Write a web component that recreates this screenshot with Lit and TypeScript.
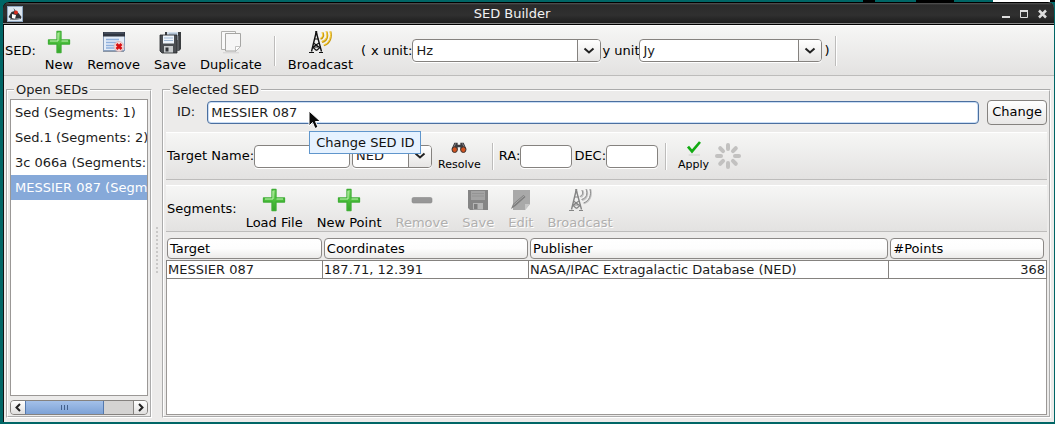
import { LitElement, html, svg, css } from "lit";
import { customElement, property } from "lit/decorators.js";

const plus = svg`
  <defs><linearGradient id="g" x1="0" y1="0" x2="0" y2="1"><stop offset="0" stop-color="#8fe07a"/><stop offset=".5" stop-color="#4cc03c"/><stop offset="1" stop-color="#37a32b"/></linearGradient></defs>
  <path d="M10 1.500h4v8.500h8.500v4H14v8.500h-4V14H1.500v-4H10z" fill="url(#g)" stroke="#3fae35" stroke-width="1.300" stroke-linejoin="round"/>
  <path d="M11 3v8H3M14.500 11H21" fill="none" stroke="#c4f2b6" stroke-width="1"/>`;

const windowDelete = svg`
  <rect x="1.500" y="2.500" width="21" height="18" fill="#e4edf8" stroke="#8ba0bd"/>
  <path d="M1 2h22v4.500H1z" fill="#2f3540"/><path d="M2 3h20" stroke="#596272"/>
  <path d="M4 9.500h13M4 12.500h13M4 15.500h8M4 18h8" stroke="#8fb0dc" stroke-width="1.400"/>
  <path d="M1 21.500h21" stroke="#8b95a3"/>
  <circle cx="17" cy="16.500" r="5" fill="#f3dada" stroke="#d8b4b4" stroke-width=".8"/>
  <path d="M14.500 14l5 5M19.500 14l-5 5" stroke="#d80f12" stroke-width="2.600"/>`;

const floppies = svg`
  <path d="M7 2h16v17l-2 2H7z" fill="#3a3d40"/><path d="M9 2h11v8H9z" fill="#cfdbe8"/><path d="M11 4h8M11 6h8" stroke="#8da4bd"/>
  <path d="M2 5h17v18H4l-2-2z" fill="#4b4e52" stroke="#24272a" stroke-width=".8"/>
  <path d="M5 5.500h11v8H5z" fill="#eef4fb"/><path d="M6 8h9M6 10.500h9" stroke="#9fb8d4"/>
  <path d="M6 16h9v6.500H6z" fill="#c9ccce"/><path d="M7.500 17.500h3v4h-3z" fill="#33363a"/>
  <path d="M20 6v15" stroke="#767a7e"/>`;

const pages = svg`
  <path d="M2.500 1.500h14v18h-14z" fill="#f9f9f9" stroke="#b0b0ae"/>
  <path d="M6.500 3.500h15v13l-4.500 4.500H6.500z" fill="#f6f6f6" stroke="#a6a6a4"/>
  <path d="M21.500 16.500h-5v5z" fill="#fff" stroke="#b4b4b2" stroke-width=".8"/>
  <path d="M4 22.800h16" stroke="#d2d1d0"/>`;

const antenna = (mast: string, wave: string, edge: string) => svg`
  <g fill="none" stroke="${mast}" stroke-width="1.100">
    <path d="M8 3L3.500 21.500M8.500 3L13.500 21.500" stroke-width="1.400"/>
    <path d="M8.200 1v4" stroke-width="2"/>
    <path d="M6.500 9h4M5.500 13l5.500 4M11 13L5 17M5 17h7.500M4.500 17l4 3.500M12.500 17l-4 3.500M1 22.500h5M11 22.500h4"/>
  </g>
  <g fill="none" stroke="${edge}" stroke-width="1.800"><path d="M12.500 9c3-1 3.500-4 2-6.500M14 12c5-1 6.500-6 4.500-10.500M16 15.500c6-2 8-8 6.500-14"/></g>
  <g fill="none" stroke="${wave}" stroke-width="1"><path d="M11.800 8.500c3-1 3.500-4 2-6.500M13.500 11.500c5-1 6.500-6 4.500-10.500M15.500 15c6-2 8-8 6.500-14"/></g>`;

const minus = svg`<rect x="2" y="9.500" width="20" height="5.500" rx="1.500" fill="#979797" stroke="#8a8a8a" stroke-width=".6"/>`;

const floppyGray = svg`
  <path d="M2 2h20v20H4l-2-2z" fill="#858585"/><path d="M5 3h14v9H5z" fill="#a3a3a3"/>
  <path d="M6 5.500h12M6 8h12" stroke="#949494"/><path d="M7 15h10v6.500H7z" fill="#b5b5b5"/><path d="M8 16h3.500v5H8z" fill="#7d7d7d"/>`;

const editGray = svg`
  <path d="M4 2h17v14l-5 6H4z" fill="#a9a9a9"/><path d="M21 16h-5v6z" fill="#c6c6c6"/>
  <path d="M2 21l2-5L14.500 7l2 2L6.500 18z" fill="#7e7e7e"/><path d="M4.500 17L15 8" stroke="#b5b5b5" stroke-width=".8"/>`;

const binoculars = svg`
  <path d="M5 4h5v3h4V4h5l4 9-5 4-4-2v-4h-4v4l-4 2-5-4z" fill="#3d3d40"/>
  <path d="M7 5l-3 6M17 5l3 6" stroke="#85858a" stroke-width="1.500"/>
  <ellipse cx="5.500" cy="14.500" rx="4" ry="4.200" fill="#d2531f" stroke="#333" stroke-width="1.400"/>
  <ellipse cx="18.500" cy="14.500" rx="4" ry="4.200" fill="#d2531f" stroke="#333" stroke-width="1.400"/>`;

const check = svg`
  <path d="M3 10l6 7L21 3" fill="none" stroke="#12ab12" stroke-width="4"/>
  <path d="M4 22.500h17" stroke="#cfcecd" stroke-width="1.500"/>`;

const icons: Record<string, unknown> = {
  plus, windowDelete, floppies, pages, minus, floppyGray, editGray, binoculars, check,
  antenna: antenna("#111", "#ffd84a", "#c89a10"),
  antennaGray: antenna("#858585", "#8f8f8f", "#c4c4c4"),
};

@customElement("tool-button")
class ToolButton extends LitElement {
  @property() icon = "";
  @property() label = "";
  @property({ type: Boolean }) disabled = false;
  @property({ type: Boolean, reflect: true }) small = false;

  static styles = css`
    :host { display: block; }
    button {
      display: flex; flex-direction: column; align-items: center; gap: 3px;
      border: 0; padding: 2px 7px 0; background: none; color: #000;
      font: 13px/16px "DejaVu Sans", sans-serif; white-space: nowrap;
    }
    button:disabled { color: #b0afae; text-shadow: 1px 1px #fff; }
    svg { width: 24px; height: 24px; display: block; }
    :host([small]) button { font-size: 11px; gap: 2px; line-height: 14px; padding: 0 6px; }
    :host([small]) svg { width: 16px; height: 16px; }
  `;

  render() {
    return html`<button type="button" ?disabled=${this.disabled}>
      <svg viewBox="0 0 24 24" aria-hidden="true">${icons[this.icon]}</svg>
      <span>${this.label}</span>
    </button>`;
  }
}

@customElement("combo-box")
class ComboBox extends LitElement {
  @property() value = "";
  @property() name = "";

  static styles = css`
    :host { display: grid; height: 23px; }
    select, .arrow { grid-area: 1 / 1; }
    select {
      appearance: none; width: 100%; height: 23px; margin: 0; padding: 0 24px 0 3px;
      border: 1px solid #85827f; border-radius: 4px; background: #fff; color: #1c1c1c;
      font: 13px/16px "DejaVu Sans", sans-serif; box-shadow: 0 1px #fff;
    }
    .arrow {
      justify-self: end; width: 22px; margin: 1px; pointer-events: none; z-index: 1;
      display: grid; place-items: center; border-left: 1px solid #85827f;
      border-radius: 0 3px 3px 0; background: linear-gradient(#fff, #e6e5e4);
    }
    svg { width: 12px; height: 8px; }
  `;

  render() {
    return html`<select aria-label=${this.name}><option>${this.value}</option></select>
      <span class="arrow"><svg viewBox="0 0 12 8"><path d="M1.500 1.500L6 5.500l4.500-4" fill="none" stroke="#222" stroke-width="2"/></svg></span>`;
  }
}

@customElement("app-root")
class AppRoot extends LitElement {
  private seds = ["Sed (Segments: 1)", "Sed.1 (Segments: 2)", "3c 066a (Segments: 1)", "MESSIER 087 (Segments: 1)"];
  private columns = ["Target", "Coordinates", "Publisher", "#Points"];
  private rows = [["MESSIER 087", "187.71, 12.391", "NASA/IPAC Extragalactic Database (NED)", "368"]];

  static styles = css`
    * { box-sizing: border-box; }
    :host {
      display: flex; flex-direction: column; min-height: 100vh; padding: 0 1px 2px 3px;
      background: #006666; font: 13px/16px "DejaVu Sans", sans-serif; color: #1c1c1c;
      box-sizing: border-box;
    }
    .desktop {
      height: 2px; margin: 0 -1px 0 -3px;
      background: linear-gradient(270deg, #000 0 5px, #fff 5px 62px, #066 62px 101px, #000 101px 139px, #066 139px 180px, #000 180px 192px, #066 192px);
    }
    .window {
      flex: 1; display: flex; flex-direction: column; border-left: 1px solid #111;
      border-radius: 6px 6px 0 0; background: #ecebea;
    }
    .titlebar {
      height: 23px; display: flex; align-items: center;
      padding: 0 5px 0 4px; margin-left: -1px; border-radius: 6px 6px 0 0; border: solid #000; border-width: 1px 0;
      background: linear-gradient(#565656, #2b2b2b 2px, #303030 12px, #222 18px, #1c1c1c 20px, #888 20px);
      color: #f2f2f2;
    }
    .title { flex: 1; text-align: center; }
    .app-icon { width: 16px; height: 16px; display: block; }
    .window-buttons { display: flex; justify-content: flex-end; gap: 6px; }
    .window-buttons button { border: 0; padding: 0; background: none; width: 12px; height: 12px; }
    .window-buttons svg { display: block; width: 12px; height: 12px; }
    .toolbar {
      display: flex; align-items: center; border-top: 1px solid #fff; border-bottom: 1px solid #bdbcbb;
      background: linear-gradient(#f6f6f5, #e3e2e1); color: #000;
    }
    .toolbar label, .toolbar span { white-space: nowrap; }
    .main-bar { height: 51px; padding-left: 1px; }
    .main-bar tool-button:first-of-type { margin-left: 2px; }
    .separator { width: 2px; height: 30px; border-left: 1px solid #bdbcbb; border-right: 1px solid #fff; }
    .paren { padding: 0 5px 0 1px; }
    .x-unit { width: 189px; }
    .y-label { padding-left: 1px; }
    .y-unit { width: 183px; }
    .close { padding: 0 5px 0 2px; }
    .gap-left { margin-left: 5px; }
    .content { flex: 1; display: flex; padding: 6px 3px 4px 2px; }
    fieldset { margin: 0; padding: 1px 2px; border: 2px groove #fff; min-width: 0; display: flex; flex-direction: column; }
    legend { margin-left: 4px; padding: 0 2px; line-height: 16px; }
    .open { width: 146px; }
    .list {
      flex: 1; margin: 0; padding: 0; list-style: none; overflow: hidden; background: #fff;
      border: 1px solid #9b9896;
    }
    .list li { height: 25px; line-height: 25px; padding-left: 4px; white-space: nowrap; }
    .list .selected { background: #86a9d9; color: #fff; }
    .scrollbar {
      display: flex; height: 15px; margin-top: 4px; border: 1px solid #85827f; border-radius: 4px;
      overflow: hidden; background: #d4d3d2;
    }
    .scrollbar button { width: 14px; padding: 0; border: 0; background: linear-gradient(#fff, #e0dfde); display: grid; place-items: center; }
    .scrollbar button:last-child { border-left: 1px solid #85827f; }
    .scrollbar svg { width: 8px; height: 9px; }
    .thumb {
      width: 73%; display: flex; justify-content: center; align-items: center; gap: 2px;
      border: solid #5479ae; border-width: 0 1px; background: linear-gradient(#a3c0e9, #7da2d6);
    }
    .thumb i { width: 1px; height: 5px; background: #42608c; }
    .track { flex: 1; display: flex; }
    .divider { width: 10px; display: grid; place-items: center; }
    .grip { width: 4px; height: 48px; background: radial-gradient(circle, #c9c8c7 1px, #fff0 1px) 0 0 / 4px 4px; }
    .selected-sed { flex: 1; }
    .id-row { display: flex; align-items: center; padding-left: 11px; height: 26px; }
    input {
      height: 23px; min-width: 0; padding: 0 3px; border: 1px solid #85827f; border-radius: 4px; background: #fff;
      color: #1c1c1c; font: 13px/16px "DejaVu Sans", sans-serif; outline: none; box-shadow: 0 1px #fff;
    }
    .id-field { position: relative; flex: 1; display: flex; margin: 0 8px 0 12px; }
    .id-field input { flex: 1; border-color: #4b6f9f; box-shadow: inset 0 0 0 1px #c9ddf5; }
    .pointer { position: absolute; left: 101px; top: 9px; width: 14px; height: 20px; z-index: 3; }
    .tooltip {
      position: absolute; left: 102px; top: 30px; z-index: 2; padding: 3px 5px 2px 6px; white-space: nowrap;
      border: 1px solid #6096cc; background: #e6f2ff; color: #111;
    }
    .change {
      height: 25px; padding: 0 4px; border: 1px solid #85827f; border-radius: 4px; color: #000;
      background: linear-gradient(#fff, #e8e7e6); font: 13px/16px "DejaVu Sans", sans-serif;
    }
    .target-bar { height: 48px; margin-top: 7px; padding-left: 1px; }
    .target-bar .separator { height: 27px; }
    .target-name { width: 96px; margin-right: 2px; }
    .coord { width: 52px; margin-right: 2px; }
    .catalog { width: 80px; }
    .spinner { width: 26px; height: 26px; }
    .segment-bar { height: 47px; margin-top: 5px; padding-left: 1px; }
    .segment-bar label { padding-right: 2px; }
    .table-area { flex: 1; display: flex; flex-direction: column; margin-top: 5px; }
    table { width: 100%; table-layout: fixed; border-collapse: separate; border-spacing: 0; }
    th { padding: 1px; text-align: left; font-weight: 400; color: #000; }
    th:last-child { padding-right: 3px; }
    th div { height: 21px; padding: 2px; border: 1px solid #8b8886; border-radius: 4px; background: linear-gradient(#fff, #fdfdfd 50%, #ecebea); }
    td { height: 19px; padding: 0 1px; background: #fff; border: solid #85827f; border-width: 1px 1px 1px 0; white-space: nowrap; }
    td:first-child { border-left-width: 1px; }
    td:last-child { text-align: right; }
    .target-col { width: 17.8%; }
    .coord-col { width: 23.4%; }
    .points-col { width: 17.9%; }
    .empty { flex: 1; background: #fff; border: solid #9b9896; border-width: 0 1px 1px; }
  `;

  render() {
    return html`
      <div class="desktop"></div>
      <main class="window">
        <header class="titlebar">
          <svg class="app-icon" viewBox="0 0 16 16"><rect width="16" height="16" fill="#dce6f0"/><rect x=".5" y=".5" width="15" height="15" fill="none" stroke="#8ea6c0"/><path d="M6.500 2l1 3-3 1-3 5 4 3 8-1 1-2-3-4-2-1z" fill="#303236"/><path d="M5 8l4 1-1 4-3-1z" fill="#fff"/><circle cx="9" cy="6.500" r="2" fill="#d52b1e"/><path d="M3 13.500l10-1" stroke="#8a9099"/></svg>
          <span class="title">SED Builder</span>
          <div class="window-buttons">
            <button aria-label="Minimize"><svg viewBox="0 0 12 12"><path d="M1 9h8" stroke="#ddd" stroke-width="2"/></svg></button>
            <button aria-label="Maximize"><svg viewBox="0 0 12 12"><path d="M1.500 3v6.500h7V3" fill="none" stroke="#ddd"/><path d="M1 3h8" stroke="#ddd" stroke-width="2"/></svg></button>
            <button aria-label="Close"><svg viewBox="0 0 12 12"><path d="M2 2.500l7 7M9 2.500l-7 7" stroke="#ddd" stroke-width="2.500"/></svg></button>
          </div>
        </header>
        <div class="toolbar main-bar">
          <span>SED:</span>
          <tool-button icon="plus" label="New"></tool-button>
          <tool-button icon="windowDelete" label="Remove"></tool-button>
          <tool-button icon="floppies" label="Save"></tool-button>
          <tool-button icon="pages" label="Duplicate"></tool-button>
          <div class="separator gap-left"></div>
          <tool-button class="gap-left" icon="antenna" label="Broadcast"></tool-button>
          <span class="paren">(</span>
          <span>x unit:</span>
          <combo-box class="x-unit" name="x unit" value="Hz"></combo-box>
          <span class="y-label">y unit</span>
          <combo-box class="y-unit" name="y unit" value="Jy"></combo-box>
          <span class="close">)</span>
          <div class="separator"></div>
        </div>
        <div class="content">
          <fieldset class="open">
            <legend>Open SEDs</legend>
            <ul class="list">
              ${this.seds.map((s, i) => html`<li class=${i === 3 ? "selected" : ""}>${s}</li>`)}
            </ul>
            <div class="scrollbar">
              <button aria-label="Scroll left"><svg viewBox="0 0 8 9"><path d="M6 1L2.500 4.500 6 8" fill="none" stroke="#222" stroke-width="2"/></svg></button>
              <div class="track"><div class="thumb"><i></i><i></i><i></i></div></div>
              <button aria-label="Scroll right"><svg viewBox="0 0 8 9"><path d="M2 1l3.500 3.500L2 8" fill="none" stroke="#222" stroke-width="2"/></svg></button>
            </div>
          </fieldset>
          <div class="divider"><div class="grip"></div></div>
          <fieldset class="selected-sed">
            <legend>Selected SED</legend>
            <div class="id-row">
              <label for="sed-id">ID:</label>
              <div class="id-field">
                <input id="sed-id" .value=${"MESSIER 087"} />
                <div class="tooltip" role="tooltip">Change SED ID</div>
                <svg class="pointer" viewBox="0 0 14 20"><path d="M1 1v15l3.500-3.500 2.500 6 3-1.300-2.500-5.700h5z" fill="#0a0a0a" stroke="#fff"/></svg>
              </div>
              <button class="change" type="button">Change</button>
            </div>
            <div class="toolbar target-bar">
              <label for="target">Target Name:</label>
              <input id="target" class="target-name" />
              <combo-box class="catalog" name="Catalog" value="NED"></combo-box>
              <tool-button small icon="binoculars" label="Resolve"></tool-button>
              <div class="separator gap-left"></div>
              <label class="gap-left" for="ra">RA:</label>
              <input id="ra" class="coord" />
              <label for="dec">DEC:</label>
              <input id="dec" class="coord" />
              <div class="separator gap-left"></div>
              <tool-button class="gap-left" small icon="check" label="Apply"></tool-button>
              <svg class="spinner" viewBox="0 0 26 26">
                ${[0, 45, 90, 135, 180, 225, 270, 315].map((a) => svg`<rect x="11" y="0" width="4" height="8" rx="2" fill="#c2c1c0" transform="rotate(${a} 13 13)"/>`)}
              </svg>
            </div>
            <div class="toolbar segment-bar">
              <label>Segments:</label>
              <tool-button icon="plus" label="Load File"></tool-button>
              <tool-button icon="plus" label="New Point"></tool-button>
              <tool-button disabled icon="minus" label="Remove"></tool-button>
              <tool-button disabled icon="floppyGray" label="Save"></tool-button>
              <tool-button disabled icon="editGray" label="Edit"></tool-button>
              <tool-button disabled icon="antennaGray" label="Broadcast"></tool-button>
            </div>
            <div class="table-area">
              <table>
                <colgroup><col class="target-col" /><col class="coord-col" /><col /><col class="points-col" /></colgroup>
                <thead><tr>${this.columns.map((c) => html`<th scope="col"><div>${c}</div></th>`)}</tr></thead>
                <tbody>${this.rows.map((r) => html`<tr>${r.map((c) => html`<td>${c}</td>`)}</tr>`)}</tbody>
              </table>
              <div class="empty"></div>
            </div>
          </fieldset>
        </div>
      </main>`;
  }
}
